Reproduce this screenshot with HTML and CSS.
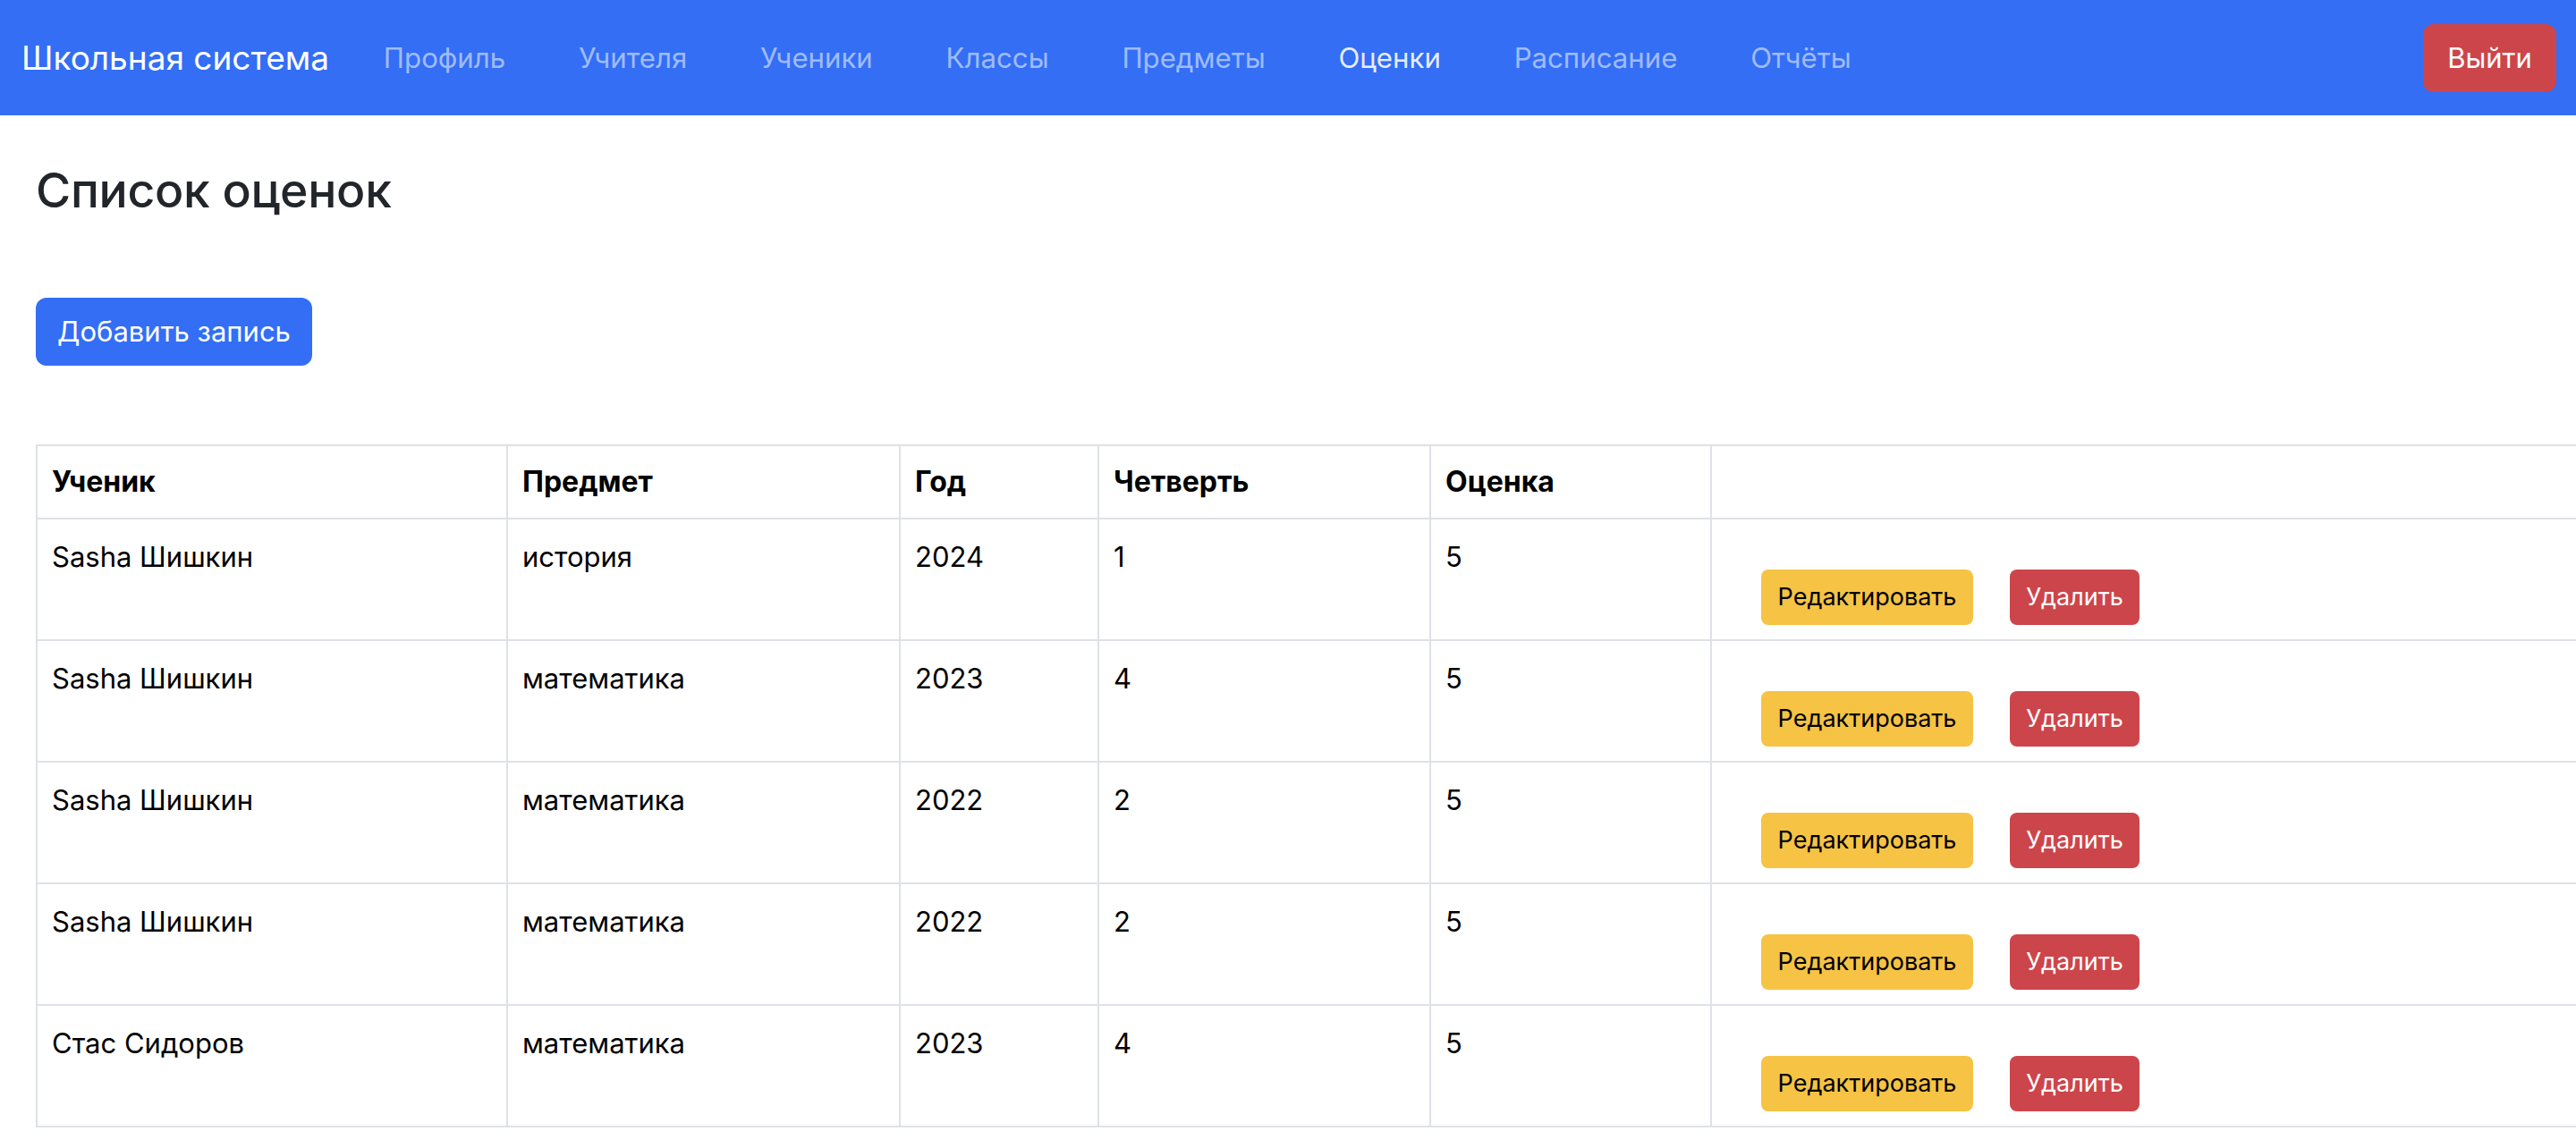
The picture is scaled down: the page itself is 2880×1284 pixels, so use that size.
FILE: index.html
```html
<!DOCTYPE html>
<html lang="ru">
<head>
<meta charset="utf-8">
<title>Школьная система</title>
<link rel="stylesheet" href="styles.css">
</head>
<body>
<nav class="navbar">
  <a class="brand" href="#">Школьная система</a>
  <ul class="nav">
    <li><a class="nav-link" href="#">Профиль</a></li>
    <li><a class="nav-link" href="#">Учителя</a></li>
    <li><a class="nav-link" href="#">Ученики</a></li>
    <li><a class="nav-link" href="#">Классы</a></li>
    <li><a class="nav-link" href="#">Предметы</a></li>
    <li><a class="nav-link active" href="#">Оценки</a></li>
    <li><a class="nav-link" href="#">Расписание</a></li>
    <li><a class="nav-link" href="#">Отчёты</a></li>
  </ul>
  <button class="btn btn-danger btn-logout">Выйти</button>
</nav>
<main class="content">
  <h2 class="title">Список оценок</h2>
  <button class="btn btn-primary btn-add">Добавить запись</button>
  <table class="grades">
    <thead>
      <tr>
        <th class="c1">Ученик</th>
        <th class="c2">Предмет</th>
        <th class="c3">Год</th>
        <th class="c4">Четверть</th>
        <th class="c5">Оценка</th>
        <th class="c6"></th>
      </tr>
    </thead>
    <tbody>
      <tr>
        <td>Sasha Шишкин</td><td>история</td><td>2024</td><td>1</td><td>5</td>
        <td><div class="actions"><button class="btn-sm btn-warning">Редактировать</button><button class="btn-sm btn-danger btn-del">Удалить</button></div></td>
      </tr>
      <tr>
        <td>Sasha Шишкин</td><td>математика</td><td>2023</td><td>4</td><td>5</td>
        <td><div class="actions"><button class="btn-sm btn-warning">Редактировать</button><button class="btn-sm btn-danger btn-del">Удалить</button></div></td>
      </tr>
      <tr>
        <td>Sasha Шишкин</td><td>математика</td><td>2022</td><td>2</td><td>5</td>
        <td><div class="actions"><button class="btn-sm btn-warning">Редактировать</button><button class="btn-sm btn-danger btn-del">Удалить</button></div></td>
      </tr>
      <tr>
        <td>Sasha Шишкин</td><td>математика</td><td>2022</td><td>2</td><td>5</td>
        <td><div class="actions"><button class="btn-sm btn-warning">Редактировать</button><button class="btn-sm btn-danger btn-del">Удалить</button></div></td>
      </tr>
      <tr>
        <td>Стас Сидоров</td><td>математика</td><td>2023</td><td>4</td><td>5</td>
        <td><div class="actions"><button class="btn-sm btn-warning">Редактировать</button><button class="btn-sm btn-danger btn-del">Удалить</button></div></td>
      </tr>
    </tbody>
  </table>
</main>
</body>
</html>
```
FILE: styles.css
```css
* { box-sizing: border-box; }
html, body { margin: 0; padding: 0; }
body {
  font-family: Inter, "Liberation Sans", sans-serif;
  font-size: 31px;
  line-height: 48px;
  color: #000;
  background: #fff;
  overflow-x: hidden;
  width: 2880px;
}
.navbar {
  height: 129px;
  background: #336ef5;
  display: flex;
  align-items: center;
  padding: 0 22px 0 24px;
}
.brand {
  color: #fff;
  text-decoration: none;
  font-size: 37px;
  margin-right: 20px;
  white-space: nowrap;
}
.nav {
  list-style: none;
  margin: 0;
  padding: 0;
  display: flex;
  flex: 1;
}
.nav-link {
  display: block;
  padding: 0 40.9px;
  font-size: 31.2px;
  color: rgba(255,255,255,0.55);
  text-decoration: none;
  white-space: nowrap;
}
.nav-link.active { color: rgba(255,255,255,0.9); }
.btn {
  font-family: inherit;
  font-size: 31px;
  line-height: 48px;
  border: 2px solid transparent;
  border-radius: 12px;
  color: #fff;
  cursor: pointer;
}
.btn-danger, .btn-sm.btn-danger { background: #cc454b; color: #fff; }
.btn-primary { background: #336ef5; }
.btn-logout { width: 149px; height: 76px; padding: 0; }
.content { padding: 0 0 0 40px; }
.title {
  margin: 40px 0 0;
  font-size: 53.5px;
  font-weight: 500;
  line-height: 88px;
  color: #222529;
  letter-spacing: -0.3px;
}
.btn-add {
  display: block;
  margin-top: 76px;
  width: 309px;
  height: 76px;
  padding: 0;
}
.grades {
  margin-top: 88px;
  border-collapse: collapse;
  width: 2842px;
  table-layout: fixed;
}
.grades th, .grades td {
  border: 2px solid #dee2e6;
  padding: 16px 16px;
  text-align: left;
  vertical-align: top;
  white-space: nowrap;
}
.grades th { font-weight: 700; font-size: 32px; height: 82px; }
.grades td { height: 136px; padding-top: 18px; }
.c1 { width: 526px; }
.c2 { width: 439px; }
.c3 { width: 222px; }
.c4 { width: 371px; }
.c5 { width: 314px; }
.actions {
  display: flex;
  padding-top: 38px;
  padding-left: 39px;
  gap: 41px;
}
.btn-sm {
  font-family: inherit;
  font-size: 27px;
  line-height: 36px;
  width: 237px;
  height: 62px;
  padding: 0;
  border: 2px solid transparent;
  border-radius: 8px;
  cursor: pointer;
}
.btn-sm.btn-del { width: 145px; }
.btn-warning { background: #f6c344; color: #000; }
```
